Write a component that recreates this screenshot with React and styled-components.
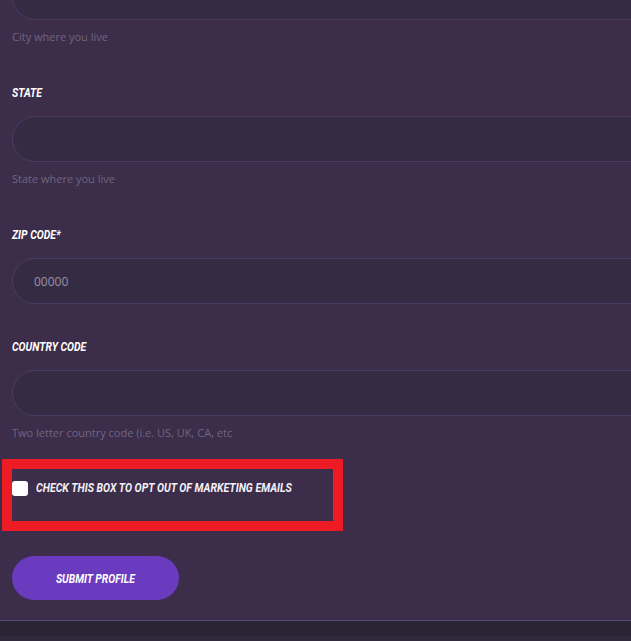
import styled, { createGlobalStyle } from "styled-components";

const Global = createGlobalStyle`
  html, body {
    margin: 0;
    background: #3c2d4a;
    overflow: hidden;
  }
  * { box-sizing: border-box; }
`;

const Page = styled.main`
  margin-top: -26px;
  padding: 0 12px;
  overflow: hidden;
  background: #3c2d4a;
`;

const Field = styled.div`
  display: flex;
  flex-direction: column;
  margin-bottom: ${p => (p.$last ? "13px" : "35px")};
`;

// condensed bold italic heading face, squeezed from Roboto
const Squeeze = styled.span`
  display: inline-block;
  font-family: Roboto, "Liberation Sans", sans-serif;
  font-weight: 700;
  font-style: italic;
  text-transform: uppercase;
  white-space: nowrap;
  transform: scaleX(${p => p.$scale || 0.8});
  transform-origin: ${p => (p.$center ? "center" : "left")} center;
`;

const Label = styled.label`
  display: block;
  height: 16px;
  line-height: 16px;
  font-size: 13px;
  color: #ffffff;
  margin-bottom: 15px;
`;

const Input = styled.input`
  width: calc(100% + 40px);
  height: 46px;
  border: 1px solid #4b3c64;
  border-radius: 23px;
  background: #352c44;
  padding: 0 21px;
  font-family: "Open Sans", sans-serif;
  font-size: 12px;
  color: #ddd;
  outline: none;

  &::placeholder {
    color: #9a92a6;
  }
`;

const Helper = styled.div`
  font-family: "Open Sans", sans-serif;
  font-size: 11px;
  line-height: 16px;
  color: #6f6681;
  margin: 9px 0 5px;
`;

const CheckRow = styled.div`
  width: 341px;
  margin-left: -10px;
  border: 10px solid #ed1c24;
  padding: 11px 0 25px;
  display: flex;
  align-items: center;
  gap: 8px;
`;

const Box = styled.span`
  width: 16px;
  height: 15px;
  border-radius: 3px;
  background: #ffffff;
  flex: none;
`;

const CheckText = styled.span`
  font-size: 13px;
  line-height: 16px;
  color: #f3f0f7;
`;

const Submit = styled.button`
  margin-top: 25px;
  width: 167px;
  height: 44px;
  border: none;
  border-radius: 22px;
  background: #6a3bbf;
  color: #fff;
  font-size: 13px;
  display: flex;
  align-items: center;
  justify-content: center;
  cursor: pointer;
`;

const Footer = styled.footer`
  margin-top: 20px;
  border-top: 1px solid #5b4a7c;
  height: 21px;
  background: linear-gradient(#2b2435 0 15px, #312a3c 15px);
`;

const fields = [
  { name: "city", label: null, help: "City where you live" },
  { name: "state", label: "State", help: "State where you live" },
  { name: "zip", label: "Zip code*", placeholder: "00000" },
  { name: "country", label: "Country code", help: "Two letter country code (i.e. US, UK, CA, etc" },
];

export default function App() {
  return (
    <>
      <Global />
      <Page>
        {fields.map((f, i) => (
          <Field key={f.name} $last={i === fields.length - 1}>
            {f.label && (
              <Label htmlFor={f.name}>
                <Squeeze>{f.label}</Squeeze>
              </Label>
            )}
            <Input id={f.name} placeholder={f.placeholder} />
            {f.help && <Helper>{f.help}</Helper>}
          </Field>
        ))}
        <CheckRow>
          <Box />
          <CheckText>
            <Squeeze $scale={0.81}>Check this box to opt out of marketing emails</Squeeze>
          </CheckText>
        </CheckRow>
        <Submit>
          <Squeeze $center>Submit profile</Squeeze>
        </Submit>
      </Page>
      <Footer />
    </>
  );
}
